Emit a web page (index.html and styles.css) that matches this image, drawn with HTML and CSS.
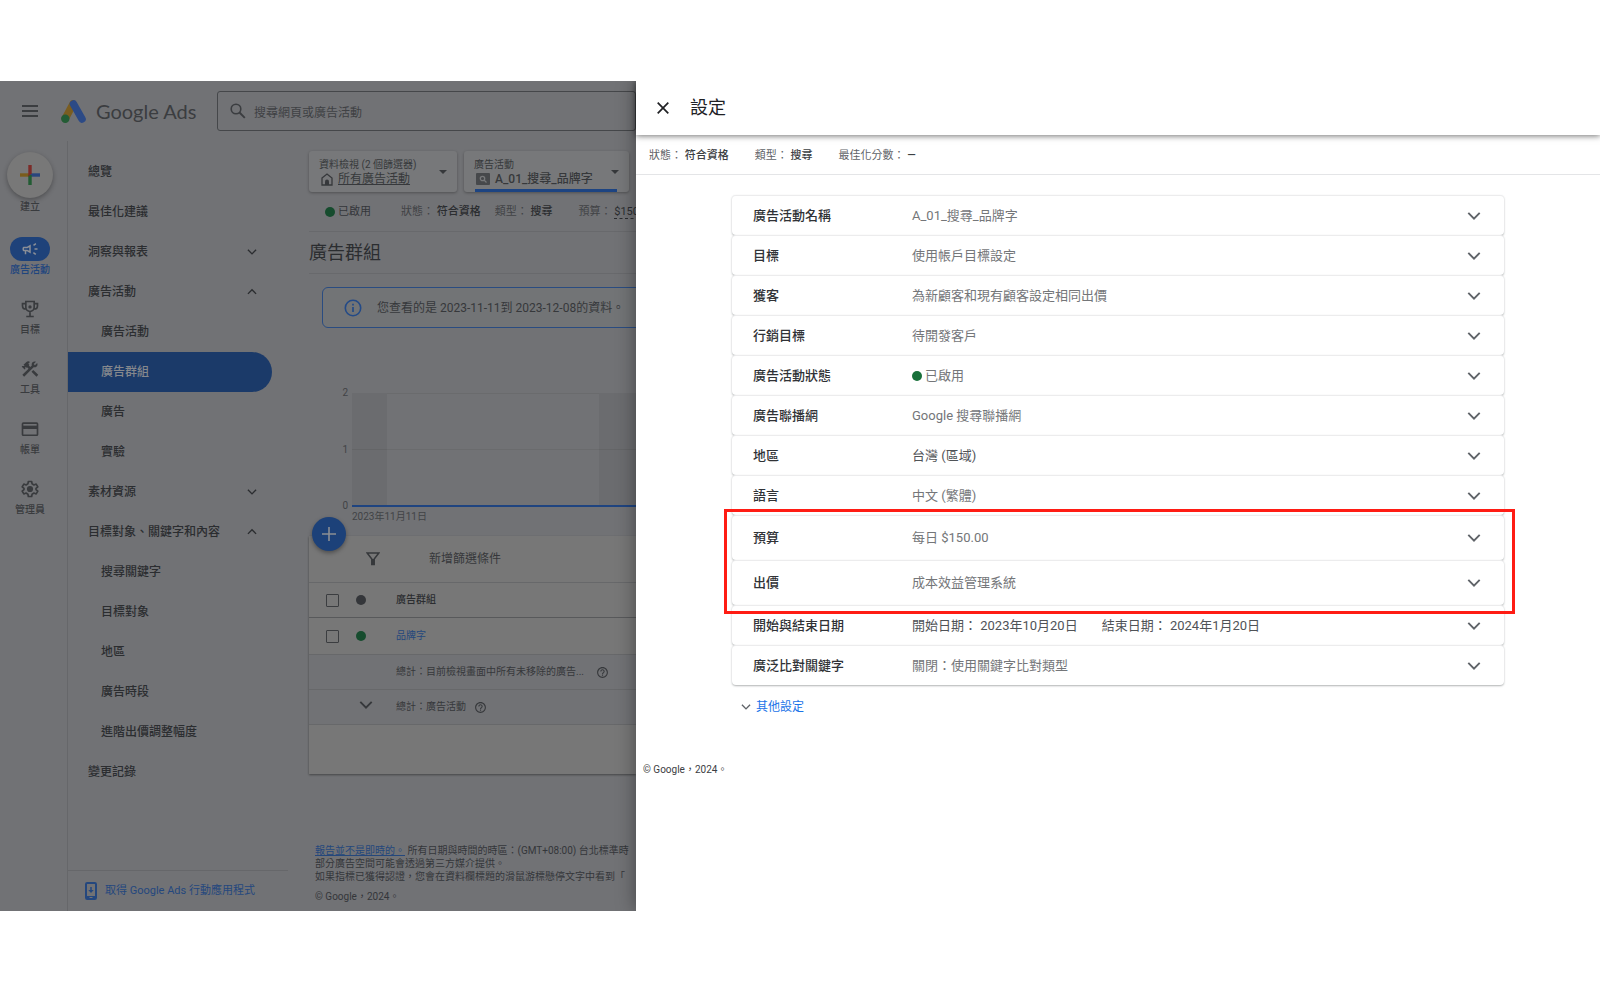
FILE: index.html
```html
<!DOCTYPE html>
<html lang="zh-Hant">
<head>
<meta charset="utf-8">
<meta name="viewport" content="width=device-width, initial-scale=1">
<title>設定 - Google Ads</title>
<link rel="stylesheet" href="styles.css">
</head>
<body>
<svg class="symbols" aria-hidden="true">
  <symbol id="down" viewBox="0 0 16 16"><path d="M1.5 4.5 8 11l6.500-6.500" fill="none" stroke="currentColor" stroke-width="2.200"/></symbol>
  <symbol id="up" viewBox="0 0 16 16"><path d="M1.500 11 8 4.500l6.500 6.500" fill="none" stroke="currentColor" stroke-width="2.200"/></symbol>
  <symbol id="help" viewBox="0 0 24 24"><path fill="currentColor" d="M11 18h2v-2h-2v2zm1-16C6.480 2 2 6.480 2 12s4.480 10 10 10 10-4.480 10-10S17.520 2 12 2zm0 18c-4.410 0-8-3.590-8-8s3.590-8 8-8 8 3.590 8 8-3.590 8-8 8zm0-14c-2.210 0-4 1.790-4 4h2c0-1.100.9-2 2-2s2 .9 2 2c0 2-3 1.750-3 5h2c0-2.250 3-2.500 3-5 0-2.210-1.790-4-4-4z"/></symbol>
</svg>
<div class="page">
  <div class="app">
    <header class="topbar">
      <button class="menu" aria-label="主選單"><svg width="16" height="12" viewBox="0 0 16 12"><path d="M0 1h16M0 6h16M0 11h16" stroke="currentColor" stroke-width="1.800"/></svg></button>
      <div class="brand">
        <svg width="25" height="23" viewBox="0 0 25 23"><path d="M12 4 4.300 18.500" stroke="#7a5d20" stroke-width="7.500" stroke-linecap="round"/><path d="M12.500 4 21 19" stroke="#2c4a86" stroke-width="7.600" stroke-linecap="round"/><circle cx="4.300" cy="18.700" r="4.200" fill="#235c35"/></svg>
        <span>Google Ads</span>
      </div>
      <label class="search">
        <svg width="16" height="16" viewBox="0 0 16 16"><circle cx="6" cy="6" r="4.800" fill="none" stroke="currentColor" stroke-width="1.600"/><path d="m9.500 9.500 5.300 5.300" stroke="currentColor" stroke-width="1.900"/></svg>
        <input type="search" placeholder="搜尋網頁或廣告活動" aria-label="搜尋網頁或廣告活動">
      </label>
    </header>
    <div class="workspace">
      <nav class="rail" aria-label="主要">
        <a class="rail-item create" href="#"><span class="create-disc"><svg width="20" height="20" viewBox="0 0 20 20"><path d="M0 10h10" stroke="#7a5c1c" stroke-width="3.400"/><path d="M10 10h10" stroke="#29457d" stroke-width="3.400"/><path d="M10 10v10" stroke="#225c33" stroke-width="3.400"/><path d="M8.300 0h3.400v8.300L8.300 11.700z" fill="#7c2b28"/></svg></span>建立</a>
        <a class="rail-item current" href="#"><span class="rail-icon"><svg width="18" height="18" viewBox="0 0 24 24" fill="currentColor"><path d="M18 11v2h4v-2h-4zm-2 6.610c.96.710 2.210 1.650 3.200 2.390.4-.53.8-1.070 1.200-1.600-.99-.74-2.240-1.680-3.200-2.400-.4.540-.8 1.080-1.200 1.610zM20.400 5.600c-.4-.53-.8-1.070-1.200-1.600-.99.740-2.240 1.680-3.200 2.400.4.530.8 1.070 1.200 1.600.96-.72 2.210-1.650 3.200-2.400zM4 9c-1.100 0-2 .9-2 2v2c0 1.100.9 2 2 2h1v4h2v-4h1l5 3V6L8 9H4zm5.030 1.710L11 9.530v4.940l-1.970-1.180-.48-.29H4v-2h4.550l.48-.29z"/></svg></span>廣告活動</a>
        <a class="rail-item" href="#"><span class="rail-icon"><svg width="20" height="20" viewBox="0 0 24 24" fill="none" stroke="currentColor" stroke-width="2"><path d="M7 3h10v7a5 5 0 0 1-10 0zM7 5.500H3V8c0 2.500 1.800 4 4 4M17 5.500h4V8c0 2.500-1.800 4-4 4M12 15v5M7.500 21h9"/><circle cx="12" cy="9.500" r="1" /></svg></span>目標</a>
        <a class="rail-item" href="#"><span class="rail-icon"><svg width="20" height="20" viewBox="0 0 24 24" fill="currentColor"><path d="m13.783 15.172 2.121-2.121 5.996 5.996-2.121 2.121zM17.500 10c1.930 0 3.500-1.570 3.500-3.500 0-.58-.16-1.120-.41-1.600l-2.700 2.700-1.490-1.490 2.700-2.700c-.48-.25-1.020-.41-1.600-.41C15.570 3 14 4.570 14 6.500c0 .41.080.8.210 1.160l-1.850 1.850-1.780-1.780.71-.71-1.410-1.410L12 3.490c-1.170-1.170-3.070-1.170-4.240 0L4.220 7.030l1.410 1.410H2.810l-.71.710 3.540 3.540.71-.71V9.150l1.410 1.410.71-.71 1.780 1.780-7.410 7.410 2.120 2.120L16.340 9.790c.36.130.75.210 1.160.210z"/></svg></span>工具</a>
        <a class="rail-item" href="#"><span class="rail-icon"><svg width="20" height="20" viewBox="0 0 24 24"><rect x="3" y="5" width="18" height="14.500" rx="1" fill="none" stroke="currentColor" stroke-width="2"/><path d="M3 10h18" stroke="currentColor" stroke-width="4"/></svg></span>帳單</a>
        <a class="rail-item" href="#"><span class="rail-icon"><svg width="20" height="20" viewBox="0 0 24 24" fill="currentColor"><path fill="none" stroke="currentColor" stroke-width="2" stroke-linejoin="round" d="M10 3h4l.5 2.800 2.200 1.300 2.700-1 2 3.400-2.200 1.800v1.400l2.200 1.800-2 3.400-2.700-1-2.200 1.300L14 21h-4l-.5-2.800-2.200-1.300-2.700 1-2-3.400 2.200-1.800v-1.400L2.600 9.500l2-3.400 2.700 1 2.200-1.300z"/><circle cx="12" cy="12" r="3.700"/></svg></span>管理員</a>
      </nav>
      <div class="side">
        <nav class="tree" aria-label="廣告活動">
          <a href="#">總覽</a>
          <a href="#">最佳化建議</a>
          <button aria-expanded="false">洞察與報表<svg><use href="#down"/></svg></button>
          <button aria-expanded="true">廣告活動<svg><use href="#up"/></svg></button>
          <a class="child" href="#">廣告活動</a>
          <a class="child selected" href="#" aria-current="page">廣告群組</a>
          <a class="child" href="#">廣告</a>
          <a class="child" href="#">實驗</a>
          <button aria-expanded="false">素材資源<svg><use href="#down"/></svg></button>
          <button aria-expanded="true">目標對象、關鍵字和內容<svg><use href="#up"/></svg></button>
          <a class="child" href="#">搜尋關鍵字</a>
          <a class="child" href="#">目標對象</a>
          <a class="child" href="#">地區</a>
          <a class="child" href="#">廣告時段</a>
          <a class="child" href="#">進階出價調整幅度</a>
          <a href="#">變更記錄</a>
        </nav>
        <a class="mobile-app" href="#"><svg width="12" height="18" viewBox="0 0 12 18"><rect x="1" y="1" width="10" height="16" rx="1.200" fill="none" stroke="currentColor" stroke-width="2"/><path d="M1 14h10v3H1z" fill="currentColor"/><path d="M6 5v4.500" stroke="currentColor" stroke-width="1.500"/><path d="M3.300 8h5.400L6 11z" fill="currentColor"/><path d="M4.500 15.500h3" stroke="#717275"/></svg>取得 Google Ads 行動應用程式</a>
      </div>
      <main class="content">
        <div class="scopes">
          <button class="scope view-scope">
            <span class="scope-text"><span class="scope-label">資料檢視 (2 個篩選器)</span>
            <span class="scope-value"><svg width="12" height="13" viewBox="0 0 12 13"><path d="M1 5 6 1l5 4v7H1z" fill="none" stroke="currentColor" stroke-width="1.300"/><path d="M4 12V8.500a2 2 0 0 1 4 0V12z" fill="currentColor"/></svg><u>所有廣告活動</u></span></span>
            <i class="caret"></i>
          </button>
          <button class="scope campaign-scope">
            <span class="scope-text"><span class="scope-label">廣告活動</span>
            <span class="scope-value"><svg width="14" height="12" viewBox="0 0 14 12"><rect width="14" height="12" rx="1" fill="#46484b"/><circle cx="6.500" cy="5.500" r="2.200" fill="none" stroke="#77787a" stroke-width="1.300"/><path d="m8 7 2.500 2.500" stroke="#77787a" stroke-width="1.300"/></svg><b>A_01_搜尋_品牌字</b></span></span>
            <i class="caret"></i>
          </button>
        </div>
        <div class="status">
          <span class="status-on"><i class="dot green"></i>已啟用</span>
          <span>狀態： <b>符合資格</b></span>
          <span>類型： <b>搜尋</b></span>
          <span class="budget">預算： <b class="dashed">$150</b></span>
        </div>
        <h1>廣告群組</h1>
        <div class="notice"><svg width="18" height="18" viewBox="0 0 18 18"><circle cx="9" cy="9" r="7.700" fill="none" stroke="currentColor" stroke-width="1.600"/><path d="M9 8v5M9 4.800v1.700" stroke="currentColor" stroke-width="1.700"/></svg>您查看的是 2023-11-11到 2023-12-08的資料。</div>
        <div class="chart">
          <div class="axis"><span>2</span><span>1</span><span>0</span></div>
          <div class="plot"><i class="weekend"></i><i class="weekdays"></i><i class="weekend rest"></i></div>
          <span class="date">2023年11月11日</span>
        </div>
        <section class="groups">
          <button class="add" aria-label="新增廣告群組"><svg width="14" height="14" viewBox="0 0 14 14"><path d="M7 0v14M0 7h14" stroke="currentColor" stroke-width="1.600"/></svg></button>
          <button class="filter"><svg width="14" height="14" viewBox="0 0 14 14"><path d="M1.200 1h11.600L8.200 7v5.500H5.800V7z" fill="none" stroke="currentColor" stroke-width="1.500"/><path d="M5.800 7h2.400v6H5.800z" fill="currentColor"/></svg>新增篩選條件</button>
          <table>
            <thead><tr><th class="check"><input type="checkbox" aria-label="全選"></th><th class="state"><i class="dot"></i></th><th>廣告群組</th></tr></thead>
            <tbody>
              <tr><td class="check"><input type="checkbox" aria-label="選取品牌字"></td><td class="state"><i class="dot green"></i></td><td><a href="#">品牌字</a></td></tr>
              <tr class="total"><td></td><td></td><td><span class="total-label">總計：目前檢視畫面中所有未移除的廣告...<svg class="wide-gap"><use href="#help"/></svg></span></td></tr>
              <tr class="total"><td></td><td class="expand"><button aria-label="展開"><svg><use href="#down"/></svg></button></td><td><span class="total-label">總計：廣告活動<svg><use href="#help"/></svg></span></td></tr>
            </tbody>
          </table>
        </section>
        <footer class="notes">
          <p><a href="#">報告並不是即時的。</a> 所有日期與時間的時區：(GMT+08:00) 台北標準時<br>部分廣告空間可能會透過第三方媒介提供。<br>如果指標已獲得認證，您會在資料欄標題的滑鼠游標懸停文字中看到「</p>
          <p>© Google，2024。</p>
        </footer>
      </main>
    </div>
  </div>
  <aside class="drawer" aria-labelledby="drawer-title">
    <header class="drawer-head">
      <button aria-label="關閉"><svg width="12" height="12" viewBox="0 0 12 12"><path d="m.7.7 10.600 10.600M11.300.7.7 11.300" stroke="currentColor" stroke-width="1.700"/></svg></button>
      <h2 id="drawer-title">設定</h2>
    </header>
    <div class="summary"><span>狀態： <b>符合資格</b></span><span>類型： <b>搜尋</b></span><span>最佳化分數： <b>—</b></span></div>
    <div class="settings">
      <button class="row"><b>廣告活動名稱</b><span>A_01_搜尋_品牌字</span><svg><use href="#down"/></svg></button>
      <button class="row"><b>目標</b><span>使用帳戶目標設定</span><svg><use href="#down"/></svg></button>
      <button class="row"><b>獲客</b><span>為新顧客和現有顧客設定相同出價</span><svg><use href="#down"/></svg></button>
      <button class="row"><b>行銷目標</b><span>待開發客戶</span><svg><use href="#down"/></svg></button>
      <button class="row"><b>廣告活動狀態</b><span class="enabled"><i class="dot"></i>已啟用</span><svg><use href="#down"/></svg></button>
      <button class="row"><b>廣告聯播網</b><span>Google 搜尋聯播網</span><svg><use href="#down"/></svg></button>
      <button class="row"><b>地區</b><span class="strong">台灣 (區域)</span><svg><use href="#down"/></svg></button>
      <button class="row"><b>語言</b><span>中文 (繁體)</span><svg><use href="#down"/></svg></button>
      <div class="marked">
        <button class="row tall"><b>預算</b><span>每日 $150.00</span><svg><use href="#down"/></svg></button>
        <button class="row tall"><b>出價</b><span>成本效益管理系統</span><svg><use href="#down"/></svg></button>
      </div>
      <button class="row"><b>開始與結束日期</b><span class="strong dates"><span>開始日期： 2023年10月20日</span><span>結束日期： 2024年1月20日</span></span><svg><use href="#down"/></svg></button>
      <button class="row"><b>廣泛比對關鍵字</b><span>關閉：使用關鍵字比對類型</span><svg><use href="#down"/></svg></button>
    </div>
    <button class="more"><svg><use href="#down"/></svg>其他設定</button>
    <p class="copyright">© Google，2024。</p>
  </aside>
</div>
</body>
</html>
```
FILE: styles.css
```css
* { box-sizing: border-box; }
body {
  margin: 0;
  background: #fff;
  font-family: Roboto, "Noto Sans CJK TC", sans-serif;
  font-size: 12px;
  line-height: 16px;
  color: #2b2d30;
}
button, input { font: inherit; color: inherit; }
button { border: 0; padding: 0; background: none; text-align: left; cursor: pointer; }
a { color: inherit; text-decoration: none; }
b { font-weight: 500; }
h1, h2, p { margin: 0; }
svg { flex: none; display: block; }
.symbols { position: absolute; width: 0; height: 0; }

.page {
  display: grid;
  grid-template-columns: 39.75% minmax(0, 1fr);
  min-height: 100vh;
  padding: 81px 0 82px;
}

/* Dimmed application */
.app {
  display: flex;
  flex-direction: column;
  min-width: 0;
  overflow: hidden;
  background: #717275;
  white-space: nowrap;
}
.topbar { display: flex; align-items: center; height: 60px; padding-left: 22px; color: #3b3d40; }
.menu { margin-right: 23px; }
.brand { display: flex; align-items: center; gap: 10px; width: 156px; font-family: Lato, sans-serif; font-size: 20px; line-height: 24px; }
.search {
  flex: 1;
  display: flex;
  align-items: center;
  gap: 8px;
  height: 40px;
  padding-left: 12px;
  border: 1px solid #45474a;
  border-radius: 3px;
}
.search input { flex: 1; min-width: 0; padding: 3px 0 0; border: 0; outline: 0; background: none; }
.search input::placeholder { color: #3f4144; opacity: 1; }
.workspace { flex: 1; display: flex; }

.rail {
  flex: none;
  width: 68px;
  padding: 1px 7px 0 0;
  border-right: 1px solid #66676a;
  font-size: 10px;
  font-weight: 500;
  color: #393b3e;
}
.rail-item { display: flex; flex-direction: column; align-items: center; height: 60px; }
.rail-icon { display: grid; place-items: center; width: 40px; height: 24px; margin-bottom: 1px; border-radius: 12px; }
.rail .create { height: 95px; padding-top: 10px; }
.create-disc {
  display: grid;
  place-items: center;
  width: 46px;
  height: 46px;
  margin-bottom: 1px;
  border-radius: 50%;
  background: #787878;
  box-shadow: 0 2px 5px rgba(0, 0, 0, .3);
}
.current { color: #1f457e; }
.current .rail-icon { background: #1e427a; color: #8b8f97; }

.side { flex: none; display: flex; flex-direction: column; width: 220px; }
.tree { display: flex; flex-direction: column; padding: 11px 16px 0 0; font-weight: 500; }
.tree > * { display: flex; align-items: center; justify-content: space-between; height: 40px; padding: 0 15px 0 20px; }
.tree svg { width: 10px; height: 10px; }
.tree .child { padding-left: 33px; }
.tree .selected { background: #1b3a69; color: #85888d; border-radius: 0 20px 20px 0; }
.mobile-app {
  display: flex;
  align-items: center;
  gap: 8px;
  height: 41px;
  margin-top: auto;
  padding-left: 17px;
  border-top: 1px solid #66676a;
  font-size: 11px;
  color: #24477e;
}

.content { flex: 1; min-width: 0; padding: 10px 0 0 21px; }
.scopes { display: flex; gap: 7px; padding-right: 7px; }
.scope {
  display: flex;
  align-items: center;
  justify-content: space-between;
  min-width: 0;
  height: 41px;
  padding: 0 10px;
  border-radius: 3px;
  background: #77787a;
  box-shadow: 0 1px 3px rgba(0, 0, 0, .3);
  color: #36383b;
}
.view-scope { flex: 1 1 148px; }
.campaign-scope {
  flex: 1 1 165px;
  background: linear-gradient(#1d4482, #1d4482) 11px 100% / calc(100% - 23px) 3px no-repeat #77787a;
}
.scope-text { display: flex; flex-direction: column; line-height: 15px; }
.scope-label { font-size: 10px; }
.scope-value { display: flex; align-items: center; gap: 5px; padding-left: 2px; }
.caret { border: 4px solid transparent; border-top-color: currentColor; border-bottom: 0; }
.status {
  display: flex;
  height: 40px;
  align-items: center;
  padding: 1px 0 0 16px;
  border-bottom: 1px solid #68696c;
  font-size: 11px;
  color: #414346;
}
.status span + span { margin-left: 14px; }
.status b { color: #2b2d30; }
.status .status-on { margin-right: 16px; color: #34363a; }
.status .budget { margin-left: 26px; }
.status .dashed { border-bottom: 1px dashed currentColor; font-weight: 400; }
.status-on, .enabled { display: flex; align-items: center; gap: 3px; }
.dot { display: inline-block; width: 10px; height: 10px; border-radius: 50%; background: #34363a; }
.dot.green { background: #164c2e; }
h1 { font-size: 18px; font-weight: 400; line-height: 41px; border-bottom: 1px solid #68696c; }
.notice {
  display: flex;
  align-items: center;
  gap: 15px;
  height: 41px;
  margin: 13px -10px 0 13px;
  padding-left: 21px;
  border: 1px solid #2a4c81;
  border-radius: 6px;
  background: #727476;
  color: #36383b;
}
.notice svg { color: #234a87; }
.chart {
  display: grid;
  grid-template-columns: 43px 1fr;
  margin-top: 57px;
  font-size: 10px;
  color: #414346;
}
.axis { display: flex; flex-direction: column; justify-content: space-between; align-items: flex-end; padding-right: 4px; }
.plot {
  display: flex;
  height: 114px;
  margin: 8px 0 7px;
  border-bottom: 2px solid #1f4480;
  background: linear-gradient(#6a6b6d, #6a6b6d) 0 56px / 100% 1px no-repeat;
}
.weekend { flex: none; width: 35px; background: rgba(0, 0, 0, .05); }
.weekdays { flex: none; width: 212px; border-top: 1px solid #6a6b6d; }
.weekend.rest { flex: 1; }
.date { grid-column: 2; margin-top: -5px; }

.groups { position: relative; height: 238px; margin-top: 11px; background: #777; box-shadow: 0 1px 2px rgba(0, 0, 0, .4); }
.add {
  position: absolute;
  left: 3px;
  top: -19px;
  display: grid;
  place-items: center;
  width: 34px;
  height: 34px;
  border-radius: 50%;
  background: #1c4179;
  box-shadow: 0 2px 4px rgba(0, 0, 0, .35);
  color: #8b8e93;
}
.filter { display: flex; align-items: center; gap: 49px; width: 100%; height: 46px; padding-left: 57px; color: #36383b; }
table { width: 100%; border-collapse: collapse; font-size: 10px; }
th, td { height: 35px; padding: 0; text-align: left; border-top: 1px solid #67686a; }
th { font-weight: 500; }
tbody tr:first-child td { height: 37px; border-top-color: #58595b; }
tbody tr:last-child td { border-bottom: 1px solid #67686a; }
.check { width: 38px; padding-left: 17px; }
.check input {
  appearance: none;
  display: block;
  width: 13px;
  height: 13px;
  margin: 0;
  border: 1px solid #3b3d40;
  border-radius: 1px;
}
.state { width: 49px; padding-left: 9px; }
.state .dot { display: block; }
.expand { padding-left: 12px; }
.expand svg { width: 14px; height: 14px; }
td a, .notes a { color: #24477c; }
.total { background: #717275; color: #36383b; }
.total-label { display: flex; align-items: center; gap: 8px; }
.total-label svg { width: 13px; height: 13px; }
.total-label .wide-gap { margin-left: 4px; }
.notes { padding: 70px 0 0 6px; font-size: 10px; line-height: 13px; color: #34363a; }
.notes a { text-decoration: underline; }
.notes p + p { margin-top: 7px; }

/* Settings drawer */
.drawer { position: relative; min-width: 0; background: #fff; color: #5f6368; clip-path: inset(0 0 0 -40px); box-shadow: 0 0 18px rgba(0, 0, 0, .4); }
.drawer-head {
  display: flex;
  align-items: center;
  gap: 21px;
  height: 54px;
  padding-left: 21px;
  box-shadow: 0 1px 6px rgba(0, 0, 0, .55);
  color: #202124;
}
h2 { font-size: 18px; font-weight: 400; line-height: 24px; }
.summary { display: flex; align-items: center; gap: 26px; height: 40px; padding: 2px 0 0 13px; border-bottom: 1px solid #e4e5e7; font-size: 11px; }
.summary b { color: #3c4043; }
.settings { padding: 20px 96px 0; font-size: 13px; line-height: 20px; }
.row {
  position: relative;
  display: grid;
  grid-template-columns: 159px 1fr 14px;
  align-items: center;
  width: 100%;
  height: 40px;
  padding: 0 23px 0 21px;
  border-top: 1px solid #ececed;
  border-radius: 4px;
  background: #fff;
  box-shadow: 0 1px 2px rgba(60, 64, 67, .4);
  color: #747679;
}
.row b { color: #303236; }
.row svg { width: 14px; height: 14px; color: #5f6368; }
.row.tall { height: 45px; }
.row .strong { color: #505357; }
.dates { display: flex; gap: 24px; }
.enabled .dot { background: #18703a; }
.marked { position: relative; }
.marked::after {
  content: "";
  position: absolute;
  z-index: 1;
  inset: -6px -11px -9px -8px;
  border: 3px solid #ff1c14;
  pointer-events: none;
}
.more { display: flex; align-items: center; gap: 5px; margin: 14px 0 0 105px; color: #1a73e8; }
.more svg { width: 10px; height: 10px; color: #5f6368; }
.copyright { margin: 47px 0 0 7px; font-size: 10px; color: #3c4043; }
```
